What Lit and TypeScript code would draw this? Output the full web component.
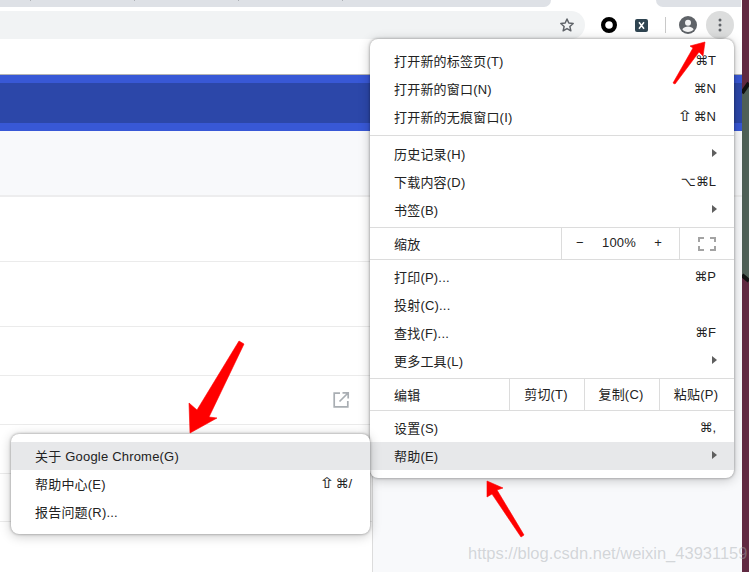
import { LitElement, html, css, nothing } from "lit";
import { customElement } from "lit/decorators.js";

type Item = { label: string; key?: string; shift?: boolean; arrow?: boolean; active?: boolean };

const group1: Item[] = [
  { label: "打开新的标签页(T)", key: "⌘T" },
  { label: "打开新的窗口(N)", key: "⌘N" },
  { label: "打开新的无痕窗口(I)", key: "⌘N", shift: true },
];
const group2: Item[] = [
  { label: "历史记录(H)", arrow: true },
  { label: "下载内容(D)", key: "⌥⌘L" },
  { label: "书签(B)", arrow: true },
];
const group3: Item[] = [
  { label: "打印(P)...", key: "⌘P" },
  { label: "投射(C)..." },
  { label: "查找(F)...", key: "⌘F" },
  { label: "更多工具(L)", arrow: true },
];
const group4: Item[] = [
  { label: "设置(S)", key: "⌘," },
  { label: "帮助(E)", arrow: true, active: true },
];
const subItems: Item[] = [
  { label: "关于 Google Chrome(G)", active: true },
  { label: "帮助中心(E)", key: "⌘/", shift: true },
  { label: "报告问题(R)..." },
];

@customElement("app-root")
export class AppRoot extends LitElement {
  static styles = css`
    :host {
      display: block;
      width: 749px;
      height: 572px;
      overflow: hidden;
      position: relative;
      background: #fff;
      font-family: "Liberation Sans", "Noto Sans CJK SC", "DejaVu Sans", sans-serif;
      font-size: 13px;
      color: #222;
    }
    .screen { display: flex; height: 572px; }
    .window { width: 742px; flex: none; display: flex; flex-direction: column; }
    .wall-art { flex: 1; display: block; width: 7px; }

    .tabs { height: 7px; flex: none; display: flex; }
    .tabstrip { background: #dee1e6; position: relative; }
    .tabstrip.left { width: 551px; border-bottom-right-radius: 7px; display: flex; gap: 103px; padding-left: 30px; box-sizing: border-box; }
    .tabstrip.right { width: 85px; margin-left: 105px; border-bottom-left-radius: 7px; }
    .tick { width: 1px; height: 1px; background: #aeb1b6; }
    .topgap { height: 4px; flex: none; }
    .toolbar { height: 28px; flex: none; display: flex; align-items: center; }
    .omnibox {
      width: 585px; height: 28px; background: #f1f3f4; border-radius: 0 14px 14px 0;
      display: flex; align-items: center; justify-content: flex-end; padding-right: 10px; box-sizing: border-box; flex: none;
    }
    .ring { margin-left: 16px; flex: none; display: block; }
    .x-icon { margin-left: 18px; flex: none; display: block; }
    .divider { width: 1px; height: 16px; background: #c9c9c9; margin-left: 17px; flex: none; }
    .avatar { margin-left: 13px; flex: none; display: block; }
    .kebab {
      width: 28px; height: 28px; border-radius: 50%; background: #dcdddd; margin-left: 9px; flex: none;
      display: flex; align-items: center; justify-content: center;
    }
    .strip { height: 36px; flex: none; box-sizing: border-box; border-bottom: 1px solid #b4b4b4; }
    .blue {
      height: 56px; flex: none; box-sizing: border-box; background: #2c47a9;
      border-top: 8px solid #3858d6; border-bottom: 8px solid #3858d6;
    }
    .content { flex: 1; background: #f8f9fb; display: flex; flex-direction: column; min-height: 0; }
    .hero { height: 66px; flex: none; box-sizing: border-box; border-bottom: 2px solid #ededee; }
    .panel { flex: 1; width: 373px; background: #fff; box-sizing: border-box; border-right: 1px solid #dcdcdc; display: flex; flex-direction: column; }
    .line { flex: none; box-sizing: border-box; border-bottom: 1px solid #ebebeb; display: flex; align-items: center; justify-content: flex-end; }
    .ext { display: block; margin-right: 22px; }

    .menu {
      position: absolute; background: #fff; border-radius: 8px; box-sizing: border-box;
      box-shadow: 0 0 3px rgba(0, 0, 0, 0.4), 0 2px 12px rgba(0, 0, 0, 0.22);
      letter-spacing: 0.2px;
    }
    .main { left: 370px; top: 39px; width: 364px; height: 439px; padding: 8px 0; }
    .sub { left: 11px; top: 434px; width: 359px; height: 100px; padding: 8px 0; }
    .item {
      height: 28px; box-sizing: border-box; display: flex; align-items: center; justify-content: space-between;
      padding: 0 18px 2px 24px; white-space: nowrap;
    }
    .item.active { background: #e7e8ea; }
    .key { font-family: "Liberation Sans", "DejaVu Sans", sans-serif; letter-spacing: 0; display: flex; align-items: center; }
    .shift { font-family: "DejaVu Sans", sans-serif; font-size: 15px; line-height: 15px; display: inline-block; transform: scaleX(1.3); margin-right: 2px; }
    .arrow { width: 0; height: 0; border-left: 5px solid #5f5f5f; border-top: 4px solid transparent; border-bottom: 4px solid transparent; margin-right: -1px; }
    .sep { height: 1px; background: #dcdcdc; }
    .sep.a { margin: 4px 0; }
    .sep.b { margin: 3px 0 0; }
    .sep.c { margin: 0 0 3px; }
    .group { display: flex; height: 31px; align-items: stretch; }
    .group .name { flex: 1; display: flex; align-items: center; padding-left: 24px; }
    .zoomctl {
      width: 118px; border-left: 1px solid #dcdcdc; display: flex; align-items: center; justify-content: space-between;
      box-sizing: border-box; padding: 0 17px 2px 14px;
    }
    .full { width: 55px; border-left: 1px solid #dcdcdc; display: flex; align-items: center; justify-content: center; box-sizing: border-box; }
    .cell {
      border-left: 1px solid #dcdcdc; display: flex; align-items: center; justify-content: center; box-sizing: border-box;
      width: 75px; white-space: nowrap; padding: 0 2px 2px 0;
    }

    .over { position: absolute; left: 0; top: 0; width: 749px; height: 572px; pointer-events: none; }
    .mark {
      position: absolute; left: 468px; top: 544px; font-size: 16.5px; line-height: 19px;
      color: rgba(165, 170, 175, 0.45); white-space: nowrap; font-family: "Liberation Sans", sans-serif;
    }
  `;

  private row(i: Item) {
    return html`<div class="item ${i.active ? "active" : ""}">
      <span>${i.label}</span>
      ${i.key
        ? html`<span class="key">${i.shift ? html`<span class="shift">⇧</span>` : nothing}${i.key}</span>`
        : nothing}
      ${i.arrow ? html`<span class="arrow"></span>` : nothing}
    </div>`;
  }

  render() {
    return html`
      <div class="screen">
        <div class="window">
          <div class="tabs">
            <div class="tabstrip left">
              <i class="tick"></i><i class="tick"></i><i class="tick"></i><i class="tick"></i>
            </div>
            <div class="tabstrip right"></div>
          </div>
          <div class="topgap"></div>
          <div class="toolbar">
            <div class="omnibox">
              <svg width="16" height="16" viewBox="0 0 24 24" fill="none" stroke="#5f6368" stroke-width="2.2" stroke-linejoin="round">
                <path d="M12 3l2.7 6.1 6.6.7-5 4.4 1.5 6.5L12 17.3 6.2 20.7l1.5-6.5-5-4.4 6.6-.7z" />
              </svg>
            </div>
            <svg class="ring" width="16" height="16" viewBox="0 0 16 16"><circle cx="8" cy="8" r="5.9" fill="none" stroke="#000" stroke-width="4.2" /></svg>
            <svg class="x-icon" width="13" height="13" viewBox="0 0 13 13">
              <rect width="13" height="13" rx="2" fill="#2f4451" />
              <path d="M4 3.2l5 6.6M9 3.2l-5 6.6" stroke="#fff" stroke-width="1.5" />
            </svg>
            <div class="divider"></div>
            <svg class="avatar" width="18" height="18" viewBox="0 0 18 18">
              <circle cx="9" cy="9" r="9" fill="#5f6368" />
              <circle cx="9" cy="6.8" r="3" fill="#f4f4f4" />
              <path d="M3.3 13.2c1.3-1.9 3.5-2.8 5.7-2.8s4.4.9 5.7 2.8C13.4 15 11.3 16 9 16s-4.4-1-5.7-2.8z" fill="#f4f4f4" />
            </svg>
            <div class="kebab">
              <svg width="4" height="14" viewBox="0 0 4 14" fill="#5f6368">
                <circle cx="2" cy="2" r="1.5" /><circle cx="2" cy="7" r="1.5" /><circle cx="2" cy="12" r="1.5" />
              </svg>
            </div>
          </div>
          <div class="strip"></div>
          <div class="blue"></div>
          <div class="content">
            <div class="hero"></div>
            <div class="panel">
              <div class="line" style="height:65px"></div>
              <div class="line" style="height:65px"></div>
              <div class="line" style="height:49px"></div>
              <div class="line" style="height:49px">
                <svg class="ext" width="18" height="18" viewBox="0 0 18 18" fill="none" stroke="#a9aeb3" stroke-width="1.7">
                  <path d="M8 2.2H2.2v13.6h13.6V10" /><path d="M10.5 1.8h5.7v5.7M16 2L7.5 10.5" />
                </svg>
              </div>
              <div class="line" style="height:49px"></div>
              <div class="line" style="height:48px"></div>
            </div>
          </div>
        </div>
        <svg class="wall-art" width="7" height="572" viewBox="0 0 7 572" preserveAspectRatio="none">
          <rect width="7" height="572" fill="#612a42" />
          <path d="M0 94L7 84V282L0 276z" fill="#4f6057" />
          <path d="M0 93L7 83M0 275L7 281" stroke="#111" stroke-width="4" fill="none" />
        </svg>
      </div>

      <div class="menu main">
        ${group1.map((i) => this.row(i))}
        <div class="sep a"></div>
        ${group2.map((i) => this.row(i))}
        <div class="sep b"></div>
        <div class="group">
          <div class="name">缩放</div>
          <div class="zoomctl"><span>−</span><span>100%</span><span>+</span></div>
          <div class="full">
            <svg width="18" height="14" viewBox="0 0 18 14" fill="none" stroke="#a3a3a3" stroke-width="2">
              <path d="M1 5V1h5M12 1h5v4M17 9v4h-5M6 13H1V9" />
            </svg>
          </div>
        </div>
        <div class="sep c"></div>
        ${group3.map((i) => this.row(i))}
        <div class="sep b"></div>
        <div class="group">
          <div class="name">编辑</div>
          <div class="cell">剪切(T)</div>
          <div class="cell">复制(C)</div>
          <div class="cell">粘贴(P)</div>
        </div>
        <div class="sep c"></div>
        ${group4.map((i) => this.row(i))}
      </div>

      <div class="menu sub">${subItems.map((i) => this.row(i))}</div>

      <svg class="over" viewBox="0 0 749 572">
        <g fill="#f00" stroke="#f00" stroke-width="0.6" stroke-linejoin="round">
          <path d="M705 42L703 56L699 52L675 84L673 83L693 48L690 46z" />
          <path d="M190 433L189 403L197 410L239 341L244 344L209 417L217 418z" />
          <path d="M487 481L503 488L497 490L524 535L521 537L492 494L487 497z" />
        </g>
      </svg>
      <div class="mark">https://blog.csdn.net/weixin_43931159</div>
    `;
  }
}
